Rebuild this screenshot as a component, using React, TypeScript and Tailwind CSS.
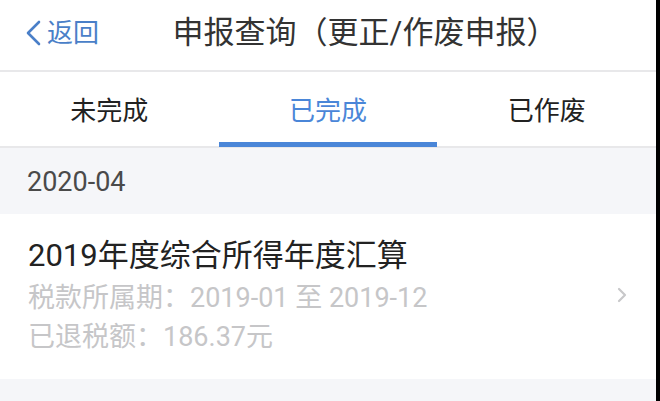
import React from "react";

const font = { fontFamily: "Roboto, 'Noto Sans CJK SC', sans-serif" };

export default function App() {
  return (
    <div className="flex w-[660px] h-[401px] overflow-hidden bg-black" style={font}>
      <div className="flex flex-col w-[656px] h-full bg-[#f5f6f9]">
        {/* Header */}
        <div className="relative flex items-center h-[72px] bg-white border-b-2 border-[#e8e8ea]">
          <div className="absolute left-[24px] top-[20px] flex items-center text-[#4a7fc8]">
            <svg width="20" height="26" viewBox="0 0 20 26" className="mr-[3px]">
              <path d="M15 2 L4 13 L15 24" fill="none" stroke="#4a7fc8" strokeWidth="2.6" strokeLinecap="round" strokeLinejoin="round" />
            </svg>
            <span className="text-[26px] leading-[26px]">返回</span>
          </div>
          <div className="w-full text-center pl-[74px] text-[31px] leading-none text-[#333333] pb-[6px]">
            申报查询（更正/作废申报）
          </div>
        </div>
        {/* Tabs */}
        <div className="grid grid-cols-3 h-[76px] bg-white border-b-2 border-[#e8e8ea]">
          <div className="flex items-center justify-center text-[26px] text-[#222222] pt-[4px]">未完成</div>
          <div className="relative flex items-center justify-center text-[26px] text-[#4a86d8] pt-[4px]">
            已完成
            <div className="absolute left-0 right-0 bottom-[-1px] h-[5px] bg-[#4a86d8]" />
          </div>
          <div className="flex items-center justify-center text-[26px] text-[#222222] pt-[4px]">已作废</div>
        </div>
        {/* Section header */}
        <div className="flex items-center h-[66px] pl-[27px] pt-[2px] text-[27px] text-[#4a4a4a]">2020-04</div>
        {/* Card */}
        <div className="flex items-center h-[165px] bg-white pl-[28px] pr-[29px]">
          <div className="flex-1 flex flex-col">
            <div className="text-[31px] leading-[40px] text-[#222222] -mt-[2px]">2019年度综合所得年度汇算</div>
            <div className="text-[27px] leading-[40px] text-[#c6c6c8] mt-[2px]">税款所属期：2019-01 至 2019-12</div>
            <div className="text-[27px] leading-[38px] text-[#c6c6c8]">已退税额：186.37元</div>
          </div>
          <svg width="10" height="16" viewBox="0 0 10 16" className="mb-[4px]">
            <path d="M2 2 L8 8 L2 14" fill="none" stroke="#c8c8ca" strokeWidth="2.2" strokeLinecap="round" strokeLinejoin="round" />
          </svg>
        </div>
      </div>
      <div className="w-[4px]" />
    </div>
  );
}
